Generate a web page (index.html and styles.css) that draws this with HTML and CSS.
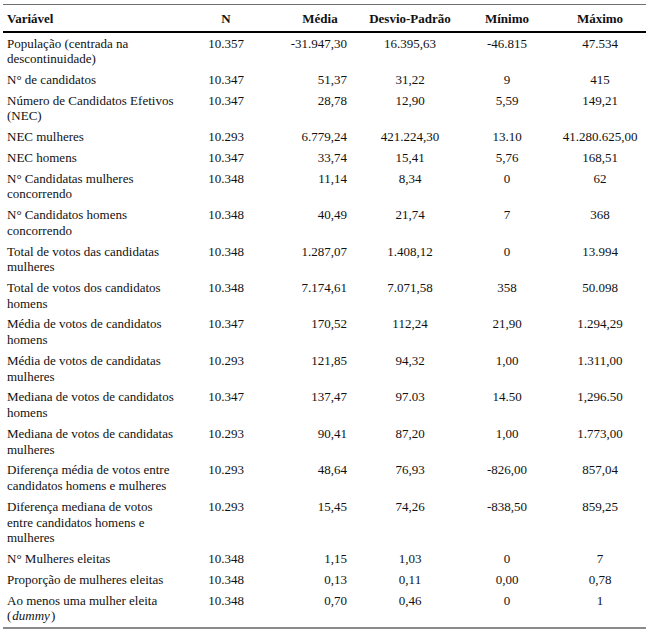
FILE: index.html
```html
<!DOCTYPE html>
<html lang="pt">
<head>
<meta charset="utf-8">
<title>Estatísticas descritivas</title>
<link rel="stylesheet" href="styles.css">
</head>
<body>
<table class="stats">
  <colgroup>
    <col class="c-var">
    <col class="c-n">
    <col class="c-media">
    <col class="c-dp">
    <col class="c-min">
    <col class="c-max">
  </colgroup>
  <thead>
    <tr>
      <th class="var">Variável</th>
      <th>N</th>
      <th class="media">Média</th>
      <th>Desvio-Padrão</th>
      <th>Mínimo</th>
      <th>Máximo</th>
    </tr>
  </thead>
  <tbody>
    <tr><td class="var">População (centrada na descontinuidade)</td><td>10.357</td><td class="media">-31.947,30</td><td>16.395,63</td><td>-46.815</td><td>47.534</td></tr>
    <tr><td class="var">N° de candidatos</td><td>10.347</td><td class="media">51,37</td><td>31,22</td><td>9</td><td>415</td></tr>
    <tr><td class="var">Número de Candidatos Efetivos (NEC)</td><td>10.347</td><td class="media">28,78</td><td>12,90</td><td>5,59</td><td>149,21</td></tr>
    <tr><td class="var">NEC mulheres</td><td>10.293</td><td class="media">6.779,24</td><td>421.224,30</td><td>13.10</td><td>41.280.625,00</td></tr>
    <tr><td class="var">NEC homens</td><td>10.347</td><td class="media">33,74</td><td>15,41</td><td>5,76</td><td>168,51</td></tr>
    <tr><td class="var">N° Candidatas mulheres concorrendo</td><td>10.348</td><td class="media">11,14</td><td>8,34</td><td>0</td><td>62</td></tr>
    <tr><td class="var">N° Candidatos homens concorrendo</td><td>10.348</td><td class="media">40,49</td><td>21,74</td><td>7</td><td>368</td></tr>
    <tr><td class="var">Total de votos das candidatas mulheres</td><td>10.348</td><td class="media">1.287,07</td><td>1.408,12</td><td>0</td><td>13.994</td></tr>
    <tr><td class="var">Total de votos dos candidatos homens</td><td>10.348</td><td class="media">7.174,61</td><td>7.071,58</td><td>358</td><td>50.098</td></tr>
    <tr><td class="var">Média de votos de candidatos homens</td><td>10.347</td><td class="media">170,52</td><td>112,24</td><td>21,90</td><td>1.294,29</td></tr>
    <tr><td class="var">Média de votos de candidatas mulheres</td><td>10.293</td><td class="media">121,85</td><td>94,32</td><td>1,00</td><td>1.311,00</td></tr>
    <tr><td class="var">Mediana de votos de candidatos homens</td><td>10.347</td><td class="media">137,47</td><td>97.03</td><td>14.50</td><td>1,296.50</td></tr>
    <tr><td class="var">Mediana de votos de candidatas mulheres</td><td>10.293</td><td class="media">90,41</td><td>87,20</td><td>1,00</td><td>1.773,00</td></tr>
    <tr><td class="var">Diferença média de votos entre candidatos homens e mulheres</td><td>10.293</td><td class="media">48,64</td><td>76,93</td><td>-826,00</td><td>857,04</td></tr>
    <tr><td class="var">Diferença mediana de votos entre candidatos homens e mulheres</td><td>10.293</td><td class="media">15,45</td><td>74,26</td><td>-838,50</td><td>859,25</td></tr>
    <tr><td class="var">N° Mulheres eleitas</td><td>10.348</td><td class="media">1,15</td><td>1,03</td><td>0</td><td>7</td></tr>
    <tr><td class="var">Proporção de mulheres eleitas</td><td>10.348</td><td class="media">0,13</td><td>0,11</td><td>0,00</td><td>0,78</td></tr>
    <tr><td class="var">Ao menos uma mulher eleita <span class="paren">(<i class="term">dummy</i>)</span></td><td>10.348</td><td class="media">0,70</td><td>0,46</td><td>0</td><td>1</td></tr>
  </tbody>
</table>
</body>
</html>
```
FILE: styles.css
```css
html, body {
  margin: 0;
  padding: 0;
  background: #ffffff;
}

body {
  padding: 4px 4px 0 3px;
  font-family: "Liberation Serif", "Times New Roman", serif;
  font-size: 13px;
  color: #111111;
}

.stats {
  border-collapse: collapse;
  table-layout: fixed;
  width: 643px;
  border-top: 1px solid #707070;
  border-bottom: 2px solid #8a8a8a;
}

.c-var { width: 182px; }
.c-n { width: 82px; }
.c-media { width: 93px; }
.c-dp { width: 100px; }
.c-min { width: 94px; }
.c-max { width: 92px; }

.stats th {
  font-weight: bold;
  text-align: center;
  vertical-align: middle;
  height: 25px;
  padding: 1px 0 0;
  line-height: 16px;
  border-bottom: 2px solid #000000;
}

.stats td {
  text-align: center;
  vertical-align: top;
  padding: 2.5px 0 2.4px;
  line-height: 15.8px;
  white-space: nowrap;
}

.stats .var {
  text-align: left;
  padding-left: 4px;
  padding-right: 8px;
  white-space: normal;
}

.stats th.media {
  padding-left: 13px;
}

.stats td.media {
  text-align: right;
  padding-right: 13px;
}

.paren {
  white-space: nowrap;
}

.term {
  padding: 0 1px;
}
```
